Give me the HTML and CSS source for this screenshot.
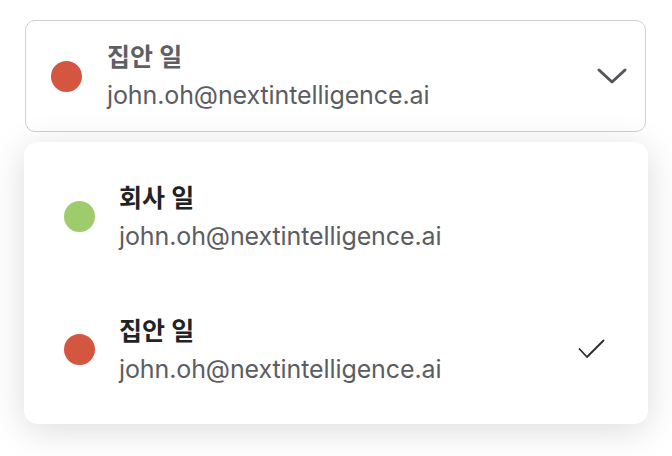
FILE: index.html
```html
<!DOCTYPE html>
<html lang="ko">
<head>
<meta charset="utf-8">
<link rel="stylesheet" href="styles.css">
</head>
<body>
<div class="page">
  <div class="trigger">
    <span class="dot dot-red"></span>
    <div class="info">
      <div class="title title-muted">집안 일</div>
      <div class="email">john.oh@nextintelligence.ai</div>
    </div>
    <svg class="chevron" width="30" height="16" viewBox="0 0 30 16"><path d="M2 2 L15 14 L28 2" fill="none" stroke="#55565b" stroke-width="3" stroke-linecap="round" stroke-linejoin="round"/></svg>
  </div>
  <div class="menu">
    <div class="item">
      <span class="dot dot-green"></span>
      <div class="info">
        <div class="title">회사 일</div>
        <div class="email">john.oh@nextintelligence.ai</div>
      </div>
    </div>
    <div class="item">
      <span class="dot dot-red"></span>
      <div class="info">
        <div class="title">집안 일</div>
        <div class="email">john.oh@nextintelligence.ai</div>
      </div>
      <svg class="check" width="28" height="22" viewBox="0 0 28 22"><path d="M1.5 10 L9 18 L25.5 1.5" fill="none" stroke="#2a2a2a" stroke-width="1.8" stroke-linecap="round" stroke-linejoin="round"/></svg>
    </div>
  </div>
</div>
</body>
</html>
```
FILE: styles.css
```css
html, body {
  margin: 0;
  background: #ffffff;
}
body {
  font-family: Inter, "Noto Sans CJK KR", sans-serif;
  width: 672px;
  height: 456px;
  overflow: hidden;
}
.page {
  padding: 20px 24px 0 24px;
  display: flex;
  flex-direction: column;
  gap: 10px;
}
.trigger {
  margin: 0 2px 0 1px;
  height: 112px;
  box-sizing: border-box;
  border: 1.5px solid #cfd0d4;
  border-radius: 10px;
  background: #ffffff;
  display: flex;
  align-items: center;
  padding: 0 18px 0 25px;
}
.trigger .info {
  margin-left: 25px;
  flex: 1;
}
.dot {
  width: 31px;
  height: 31px;
  border-radius: 50%;
  flex: none;
}
.dot-red { background: #d45540; }
.dot-green { background: #9ecb6b; }
.info {
  display: flex;
  flex-direction: column;
  gap: 6px;
}
.title {
  font-size: 25px;
  line-height: 32px;
  font-weight: 600;
  color: #222326;
}
.title-muted { color: #5d5f64; }
.email {
  font-size: 25px;
  line-height: 32px;
  color: #5b5d62;
  letter-spacing: -0.1px;
}
.chevron { flex: none; }
.menu {
  position: relative;
  background: #ffffff;
  border-radius: 14px;
  box-shadow: 0 6px 36px rgba(0, 0, 0, 0.14);
  padding: 8px 0;
}
.item {
  height: 133px;
  display: flex;
  align-items: center;
  padding: 0 42px 0 40px;
}
.item .info {
  margin-left: 24px;
  flex: 1;
}
.check { flex: none; }
```
